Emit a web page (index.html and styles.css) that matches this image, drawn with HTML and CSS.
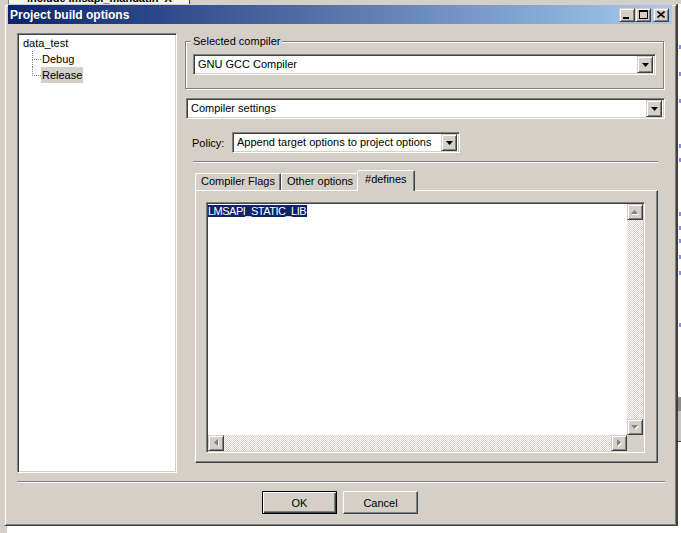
FILE: index.html
```html
<!DOCTYPE html>
<html lang="en">

<head>
    <meta charset="UTF-8">
    <title>Project build options</title>
    <link rel="stylesheet" href="styles.css">
</head>

<body>
    <div class="screen">
        <!-- editor window behind the dialog -->
        <div class="editor-tabs">
            <div class="editor-tab"><span>include lmsapi_mandatin&nbsp;&nbsp;X</span></div>
        </div>

        <div class="desktop">
            <div class="dialog">
                <div class="titlebar">
                    <span class="title">Project build options</span>
                    <div class="caption-buttons">
                        <span class="cap-btn"><svg width="8" height="8" viewBox="0 0 8 8"><rect x="0" y="6" width="6" height="2" fill="#000"/></svg></span>
                        <span class="cap-btn"><svg width="9" height="9" viewBox="0 0 9 9"><rect x="0.5" y="0.5" width="8" height="8" fill="none" stroke="#000"/><rect x="0" y="0" width="9" height="2" fill="#000"/></svg></span>
                        <span class="cap-btn close"><svg width="8" height="7" viewBox="0 0 8 7"><path d="M0.5 0.5 L7.5 6.5 M7.5 0.5 L0.5 6.5" stroke="#000" stroke-width="1.6" fill="none"/></svg></span>
                    </div>
                </div>

                <div class="dialog-body">
                    <div class="tree">
                        <div class="tree-root">data_test</div>
                        <div class="tree-children">
                            <div class="tree-item">
                                <span class="branch"><i class="branch-top"></i><i class="branch-bottom"></i></span>
                                <span class="tree-label">Debug</span>
                            </div>
                            <div class="tree-item">
                                <span class="branch"><i class="branch-top"></i></span>
                                <span class="tree-label selected">Release</span>
                            </div>
                        </div>
                    </div>

                    <div class="options">
                        <div class="group">
                            <div class="group-title">Selected compiler</div>
                            <div class="combo">
                                <span class="combo-text">GNU GCC Compiler</span>
                                <span class="combo-btn"><svg width="7" height="4" viewBox="0 0 7 4"><path d="M0 0h7l-3.5 4z" fill="#000"/></svg></span>
                            </div>
                        </div>

                        <div class="combo settings-combo">
                            <span class="combo-text">Compiler settings</span>
                            <span class="combo-btn"><svg width="7" height="4" viewBox="0 0 7 4"><path d="M0 0h7l-3.5 4z" fill="#000"/></svg></span>
                        </div>

                        <div class="policy">
                            <span class="policy-label">Policy:</span>
                            <div class="combo policy-combo">
                                <span class="combo-text">Append target options to project options</span>
                                <span class="combo-btn"><svg width="7" height="4" viewBox="0 0 7 4"><path d="M0 0h7l-3.5 4z" fill="#000"/></svg></span>
                            </div>
                        </div>

                        <div class="etched options-line"></div>

                        <div class="tabs">
                            <span class="tab">Compiler Flags</span>
                            <span class="tab">Other options</span>
                            <span class="tab active">#defines</span>
                        </div>
                        <div class="tab-panel">
                            <div class="editor">
                                <div class="editor-text"><span class="selection">LMSAPI_STATIC_LIB</span></div>
                                <div class="vscroll">
                                    <span class="scroll-btn"><svg width="8" height="5" viewBox="0 0 8 5"><path d="M4.5 1 L8 5 H1z" fill="#fff"/><path d="M3.5 0 L7 4 H0z" fill="#808080"/></svg></span>
                                    <span class="scroll-track"></span>
                                    <span class="scroll-btn"><svg width="8" height="5" viewBox="0 0 8 5"><path d="M1 1 H8 L4.5 5z" fill="#fff"/><path d="M0 0 H7 L3.5 4z" fill="#808080"/></svg></span>
                                </div>
                                <div class="hscroll">
                                    <span class="scroll-btn"><svg width="5" height="8" viewBox="0 0 5 8"><path d="M5 1 V8 L1 4.5z" fill="#fff"/><path d="M4 0 V7 L0 3.5z" fill="#808080"/></svg></span>
                                    <span class="scroll-track"></span>
                                    <span class="scroll-btn"><svg width="5" height="8" viewBox="0 0 5 8"><path d="M1 1 V8 L5 4.5z" fill="#fff"/><path d="M0 0 V7 L4 3.5z" fill="#808080"/></svg></span>
                                </div>
                                <div class="scroll-corner"></div>
                            </div>
                        </div>
                    </div>
                </div>

                <div class="etched footer-line"></div>

                <div class="footer">
                    <button type="button" class="btn default">OK</button>
                    <button type="button" class="btn">Cancel</button>
                </div>
            </div>

            <!-- sliver of the code editor to the right -->
            <div class="editor-edge">
                <i class="mark" style="margin-top: 41px"></i>
                <i class="mark" style="margin-top: 23px"></i>
                <i class="mark" style="margin-top: 23px"></i>
                <i class="mark" style="margin-top: 41px"></i>
                <i class="mark" style="margin-top: 10px"></i>
                <i class="mark" style="margin-top: 50px"></i>
                <i class="mark" style="margin-top: 10px"></i>
                <i class="mark" style="margin-top: 9px"></i>
                <i class="mark" style="margin-top: 12px"></i>
                <i class="mark" style="margin-top: 12px"></i>
                <i class="mark" style="margin-top: 48px"></i>
                <div class="edge-panel"></div>
            </div>
        </div>

        <div class="bottom-strip"></div>
    </div>
</body>

</html>
```

FILE: styles.css
```css
* {
    box-sizing: border-box;
}

body {
    margin: 0;
    font-family: "Liberation Sans", Arial, sans-serif;
    font-size: 11px;
    color: #000;
    background: #fff;
}

.screen {
    width: 681px;
    height: 533px;
    overflow: hidden;
}

/* window behind */
.editor-tabs {
    height: 4px;
    padding-left: 8px;
    background: #d4d0c8;
    overflow: hidden;
}

.editor-tab {
    width: 182px;
    height: 4px;
    padding-left: 18px;
    background: #f4f3ef;
    border-left: 1px solid #808080;
    border-right: 1px solid #404040;
    overflow: hidden;
    font-size: 11px;
    font-weight: bold;
    line-height: 14px;
    white-space: nowrap;
}

.editor-tab span {
    display: block;
    margin-top: -9px;
}

.desktop {
    display: flex;
    height: 522px;
    padding-left: 4px;
    background: #d4d0c8;
}

.editor-edge {
    width: 4px;
    background: #fff;
    border-left: 1px solid #404040;
}

.mark {
    display: block;
    width: 2px;
    height: 4px;
    margin-left: 1px;
    background: #8c8cdc;
}

.edge-panel {
    height: 45px;
    margin-top: 70px;
    background: #c8c8c8;
    border-top: 14px solid #8c8c8c;
    border-bottom: 1px solid #404040;
}

.bottom-strip {
    height: 7px;
    background: #fff;
    border-left: 7px solid #d4d0c8;
}

/* dialog frame */
.dialog {
    width: 673px;
    height: 522px;
    padding: 0 4px 0 3px;
    background: #d4d0c8;
    border: 1px solid;
    border-color: #d4d0c8 #404040 #404040 #d4d0c8;
    box-shadow: inset 1px 1px #fff, inset -1px -1px #808080;
}

.titlebar {
    display: flex;
    align-items: center;
    height: 19px;
    padding: 0 3px 0 2px;
    background: linear-gradient(to right, #0a246a, #a6caf0);
    color: #fff;
    font-size: 12px;
    font-weight: bold;
}

.caption-buttons {
    display: flex;
    margin-left: auto;
}

.cap-btn {
    display: flex;
    align-items: center;
    justify-content: center;
    width: 16px;
    height: 14px;
    background: #d4d0c8;
    border: 1px solid;
    border-color: #d4d0c8 #404040 #404040 #d4d0c8;
    box-shadow: inset 1px 1px #fff, inset -1px -1px #808080;
}

.cap-btn.close {
    margin-left: 2px;
}

.dialog-body {
    display: flex;
    gap: 8px;
    height: 440px;
    margin-top: 9px;
    padding: 0 7px 0 9px;
}

/* sunken white boxes */
.tree,
.combo,
.editor {
    background: #fff;
    border: 1px solid;
    border-color: #808080 #fff #fff #808080;
    box-shadow: inset 1px 1px #404040, inset -1px -1px #d4d0c8;
}

.tree {
    width: 160px;
    padding: 1px 1px 1px 5px;
    line-height: 16px;
}

.tree-children {
    margin-left: 9px;
}

.tree-item {
    display: flex;
}

.branch {
    display: flex;
    flex-direction: column;
    width: 9px;
    height: 16px;
}

.branch i {
    display: block;
    border-left: 1px dotted #808080;
}

.branch .branch-top {
    height: 9px;
    border-bottom: 1px dotted #808080;
}

.branch .branch-bottom {
    height: 7px;
}

.tree-label {
    padding: 0 1px;
}

.tree-label.selected {
    background: #d4d0c8;
}

/* right column */
.options {
    display: flex;
    flex: 1;
    flex-direction: column;
}

.etched {
    height: 2px;
    border-top: 1px solid #808080;
    border-bottom: 1px solid #fff;
}

.group {
    width: 479px;
    height: 48px;
    margin-top: 8px;
    padding: 0 7px 0 7px;
    border: 1px solid #808080;
    box-shadow: inset 1px 1px #fff, 1px 1px #fff;
}

.group-title {
    width: fit-content;
    margin: -7px 0 0 -2px;
    padding: 0 2px;
    background: #d4d0c8;
    line-height: 13px;
}

.combo {
    display: flex;
    align-items: center;
    height: 21px;
    padding: 2px 2px 2px 4px;
}

.group .combo {
    margin-top: 6px;
}

.combo-text {
    flex: 1;
    line-height: 17px;
    white-space: nowrap;
    overflow: hidden;
}

.combo-btn,
.scroll-btn {
    display: flex;
    align-items: center;
    justify-content: center;
    background: #d4d0c8;
    border: 1px solid;
    border-color: #d4d0c8 #404040 #404040 #d4d0c8;
    box-shadow: inset 1px 1px #fff, inset -1px -1px #808080;
}

.combo-btn {
    width: 16px;
    height: 17px;
}

.settings-combo {
    width: 479px;
    margin: 9px 0 0 1px;
}

.policy {
    display: flex;
    align-items: center;
    margin-top: 13px;
    padding-left: 7px;
}

.policy-label {
    width: 40px;
}

.policy-combo {
    width: 228px;
}

.options-line {
    margin: 8px 7px 0 8px;
}

/* tabs */
.tabs {
    display: flex;
    align-items: flex-end;
    height: 20px;
    margin: 7px 7px 0 10px;
}

.tab {
    height: 17px;
    padding: 0 5px;
    line-height: 15px;
    border: 1px solid;
    border-bottom: 0;
    border-color: #fff #404040 transparent #fff;
    border-radius: 2px 2px 0 0;
    box-shadow: inset -1px 0 #808080;
}

.tab.active {
    position: relative;
    z-index: 1;
    height: 21px;
    margin: 0 -2px -1px -2px;
    padding: 0 7px;
    line-height: 17px;
    background: #d4d0c8;
}

.tab-panel {
    height: 273px;
    margin: 0 7px 0 10px;
    padding: 11px 0 0 10px;
    border: 1px solid;
    border-color: #fff #404040 #404040 #fff;
    box-shadow: inset -1px -1px #808080;
}

.editor {
    display: grid;
    grid-template-columns: 1fr 16px;
    grid-template-rows: 1fr 16px;
    width: 439px;
    height: 251px;
    padding: 1px;
}

.editor-text {
    line-height: 14px;
}

.selection {
    padding: 0 1px 0 0;
    background: #0a246a;
    color: #fff;
    letter-spacing: -0.5px;
}

.vscroll {
    display: flex;
    flex-direction: column;
}

.hscroll {
    display: flex;
}

.scroll-btn {
    width: 16px;
    height: 16px;
    flex: none;
}

.scroll-track {
    flex: 1;
    background: repeating-conic-gradient(#fff 0 25%, #d4d0c8 0 50%) 0 0 / 2px 2px;
}

.scroll-corner {
    background: #d4d0c8;
}

/* footer */
.footer-line {
    margin: 8px 7px 0 9px;
}

.footer {
    display: flex;
    justify-content: center;
    gap: 6px;
    margin-top: 8px;
}

.btn {
    width: 75px;
    height: 23px;
    padding: 0;
    font: inherit;
    color: #000;
    background: #d4d0c8;
    border: 1px solid;
    border-color: #fff #404040 #404040 #fff;
    box-shadow: inset -1px -1px #808080;
}

.btn.default {
    border-color: #000;
    box-shadow: inset 1px 1px #fff, inset -1px -1px #404040, inset -2px -2px #808080;
}
```
